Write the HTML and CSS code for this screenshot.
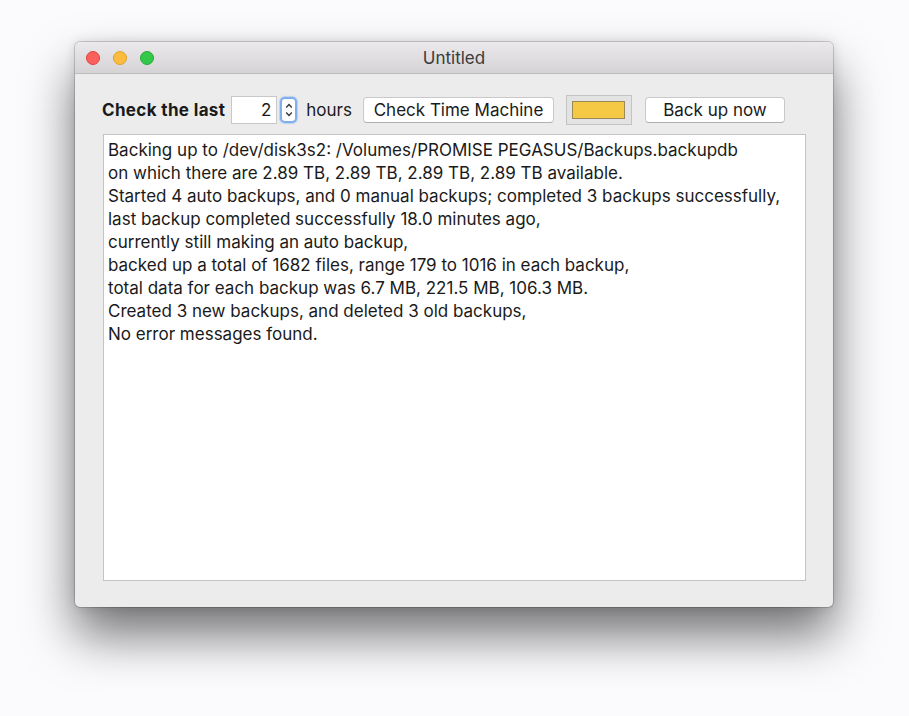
FILE: index.html
```html
<!DOCTYPE html>
<html>
<head>
<meta charset="utf-8">
<link rel="stylesheet" href="styles.css">
</head>
<body>
<div class="window">
  <div class="titlebar">
    <div class="lights">
      <span class="light red"></span>
      <span class="light yellow"></span>
      <span class="light green"></span>
    </div>
    <div class="title">Untitled</div>
  </div>
  <div class="content">
    <div class="toolbar">
      <span class="label">Check the last</span>
      <span class="field">2</span>
      <span class="stepper">
        <svg width="10" height="20" viewBox="0 0 10 20"><path d="M2.2 7.5 L5 4.5 L7.8 7.5 M2.2 12.5 L5 15.5 L7.8 12.5" fill="none" stroke="#333" stroke-width="1.3"/></svg>
      </span>
      <span class="unit">hours</span>
      <button class="btn check">Check Time Machine</button>
      <span class="well"><span class="swatch"></span></span>
      <button class="btn backup">Back up now</button>
    </div>
    <div class="textarea">
      <div>Backing up to /dev/disk3s2: /Volumes/PROMISE PEGASUS/Backups.backupdb</div>
      <div>on which there are 2.89 TB, 2.89 TB, 2.89 TB, 2.89 TB available.</div>
      <div>Started 4 auto backups, and 0 manual backups; completed 3 backups successfully,</div>
      <div>last backup completed successfully 18.0 minutes ago,</div>
      <div>currently still making an auto backup,</div>
      <div>backed up a total of 1682 files, range 179 to 1016 in each backup,</div>
      <div>total data for each backup was 6.7 MB, 221.5 MB, 106.3 MB.</div>
      <div>Created 3 new backups, and deleted 3 old backups,</div>
      <div>No error messages found.</div>
    </div>
  </div>
</div>
</body>
</html>
```
FILE: styles.css
```css
html, body {
  margin: 0;
  padding: 0;
  background: #fbfafd;
}
body {
  min-height: 716px;
  box-sizing: border-box;
  padding: 42px 0 0 75px;
  font-family: Inter, "Liberation Sans", sans-serif;
  color: #1a1a1a;
}
.window {
  width: 758px;
  height: 565px;
  border-radius: 5px;
  background: #ececec;
  box-shadow: 0 0 0 1px rgba(0,0,0,0.16), 0 0 12px rgba(0,0,0,0.12), 0 28px 50px rgba(0,0,0,0.55);
  display: flex;
  flex-direction: column;
  overflow: hidden;
}
.titlebar {
  height: 31px;
  flex: none;
  background: linear-gradient(#ebe9eb, #d5d3d5);
  border-bottom: 1px solid #bdbdbd;
  display: flex;
  align-items: center;
  position: relative;
}
.lights {
  display: flex;
  gap: 13px;
  padding-left: 11px;
  padding-top: 1px;
}
.light {
  width: 14px;
  height: 14px;
  border-radius: 50%;
  box-sizing: border-box;
}
.red { background: #fc605c; border: 1px solid #e0443e; }
.yellow { background: #fdbc40; border: 1px solid #dea123; }
.green { background: #34c84a; border: 1px solid #27aa35; }
.title {
  position: absolute;
  left: 0;
  right: 0;
  top: 6px;
  text-align: center;
  font-size: 17px;
  color: #3a3a3a;
}
.content {
  flex: 1;
  display: flex;
  flex-direction: column;
  padding: 21px 27px 26px 28px;
}
.toolbar {
  display: flex;
  align-items: center;
  height: 30px;
  margin-bottom: 9px;
  margin-left: -1px;
}
.label {
  font-weight: bold;
  font-size: 17px;
  letter-spacing: 0.35px;
}
.field {
  margin-left: 6px;
  width: 46px;
  height: 28px;
  box-sizing: border-box;
  background: #fff;
  border: 1px solid #c8c8c8;
  text-align: right;
  padding-right: 5px;
  font-size: 17px;
  line-height: 26px;
}
.stepper {
  margin-left: 3px;
  width: 17px;
  height: 26px;
  box-sizing: border-box;
  background: #fff;
  border: 2px solid #7fadee;
  border-radius: 5px;
  box-shadow: 0 0 1px 1px rgba(127,173,238,0.45);
  display: flex;
  align-items: center;
  justify-content: center;
}
.unit {
  margin-left: 9px;
  font-size: 17px;
}
.btn {
  font-family: inherit;
  font-size: 17px;
  color: #1a1a1a;
  background: #fff;
  border: 1px solid #c9c9c9;
  border-bottom-color: #b0b0b0;
  border-radius: 4px;
  height: 26px;
  padding: 0;
}
.check {
  margin-left: 11px;
  width: 191px;
}
.well {
  margin-left: 12px;
  width: 66px;
  height: 30px;
  box-sizing: border-box;
  background: #e3e3e3;
  border: 1px solid #c4c4c4;
  display: flex;
  align-items: center;
  justify-content: center;
}
.swatch {
  width: 53px;
  height: 18px;
  box-sizing: border-box;
  background: #f6c944;
  border: 1px solid #9a8a5a;
}
.backup {
  margin-left: 13px;
  width: 140px;
}
.textarea {
  flex: 1;
  background: #fff;
  border: 1px solid #c4c4c4;
  padding: 4px 4px 3px;
  font-size: 17px;
  line-height: 23px;
}
```
